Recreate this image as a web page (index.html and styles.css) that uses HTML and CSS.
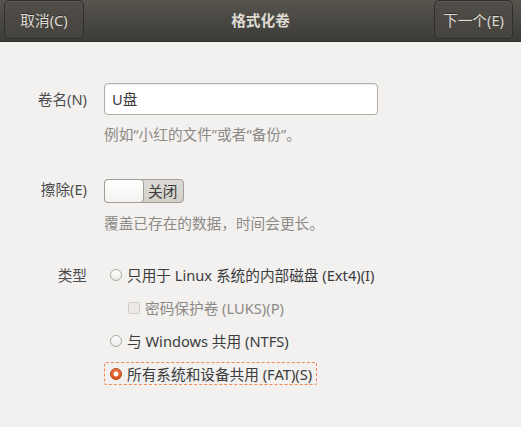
FILE: index.html
```html
<!DOCTYPE html>
<html lang="zh-CN">
<head>
<meta charset="utf-8">
<title>格式化卷</title>
<link rel="stylesheet" href="styles.css">
</head>
<body>
<div class="window">
  <header class="headerbar">
    <button class="hb-btn">取消(C)</button>
    <div class="title">格式化卷</div>
    <button class="hb-btn">下一个(E)</button>
  </header>
  <main class="form">
    <div class="label row-entry">卷名(N)</div>
    <div class="field">
      <div class="entry">U盘</div>
      <div class="hint hint-entry">例如“小红的文件”或者“备份”。</div>
    </div>

    <div class="label row-switch">擦除(E)</div>
    <div class="field">
      <div class="switch"><span class="knob"></span><span class="state">关闭</span></div>
      <div class="hint hint-switch">覆盖已存在的数据，时间会更长。</div>
    </div>

    <div class="label row-type">类型</div>
    <div class="field options">
      <div class="option"><span class="radio"></span><span>只用于 Linux 系统的内部磁盘 (Ext4)(I)</span></div>
      <div class="option sub disabled"><span class="check"></span><span>密码保护卷 (LUKS)(P)</span></div>
      <div class="option"><span class="radio"></span><span>与 Windows 共用 (NTFS)</span></div>
      <div class="option focused"><span class="radio checked"></span><span>所有系统和设备共用 (FAT)(S)</span></div>
    </div>
  </main>
</div>
</body>
</html>
```

FILE: styles.css
```css
* { box-sizing: border-box; }
html, body {
  margin: 0;
  padding: 0;
  background: #f2f1f0;
}
body {
  font-family: "Noto Sans", "Noto Sans CJK SC", sans-serif;
  font-size: 14.67px;
  color: #3c3c3c;
  width: 521px;
  height: 427px;
  overflow: hidden;
}
.headerbar {
  height: 42px;
  background: linear-gradient(#57544e, #3c3b37);
  border-bottom: 1px solid #33322f;
  display: flex;
  align-items: flex-start;
  justify-content: space-between;
  padding: 0 8px 0 4px;
}
.hb-btn {
  font: inherit;
  height: 39px;
  padding: 0;
  white-space: nowrap;
  color: #dfdbd2;
  background: linear-gradient(#514e49, #45433f);
  border: 1px solid #2f2e2b;
  border-radius: 5px;
  box-shadow: inset 0 1px rgba(255,255,255,0.08);
  text-shadow: 0 -1px rgba(0,0,0,0.4);
  width: 80px;
}
.hb-btn:last-child { width: 79px; }
.title {
  flex: 1;
  text-align: center;
  font-weight: bold;
  color: #dfdbd2;
  line-height: 40px;
  padding-left: 3px;
}
.form {
  display: grid;
  grid-template-columns: 87px 1fr;
  column-gap: 17px;
  padding-top: 41px;
  align-items: start;
}
.label {
  text-align: right;
  color: #4c4c4c;
  line-height: 20px;
}
.row-entry { margin-top: 6px; }
.row-switch { margin-top: 35px; }
.row-type { margin-top: 32px; }
.field { display: flex; flex-direction: column; align-items: flex-start; }
.entry {
  width: 274px;
  height: 32px;
  border: 1px solid #b3afa8;
  border-radius: 4px;
  background: #fff;
  box-shadow: inset 0 1px 2px rgba(0,0,0,0.08);
  padding: 0 7px;
  line-height: 30px;
  color: #3c3c3c;
}
.hint {
  color: #8d8a85;
  line-height: 20px;
}
.hint-entry { margin-top: 9px; }
.switch {
  margin-top: 35px;
  width: 80px;
  height: 24px;
  border: 1px solid #a29e97;
  border-radius: 4px;
  background: linear-gradient(#dcdad5, #d3d0ca);
  display: flex;
  align-items: center;
}
.knob {
  width: 40px;
  height: 24px;
  margin: -1px 0 -1px -1px;
  border: 1px solid #a29e97;
  border-radius: 4px;
  background: linear-gradient(#ffffff, #f4f3f1);
}
.state {
  margin-left: 4px;
  color: #3c3c3c;
  line-height: 20px;
}
.hint-switch { margin-top: 10px; }
.options {
  margin-top: 30px;
  gap: 10px;
}
.option {
  display: flex;
  align-items: center;
  height: 23px;
  padding: 0 4px 0 5px;
  gap: 5px;
  border: 1px dashed transparent;
  color: #3c3c3c;
}
.option.sub { padding-left: 23px; }
.option.disabled { color: #8d8a85; }
.option.focused {
  border-color: #ef8a57;
  border-radius: 2px;
}
.radio {
  width: 12px;
  height: 12px;
  border-radius: 50%;
  border: 1px solid #aaa7a1;
  background: linear-gradient(#ffffff, #ecebe8);
  flex: none;
}
.radio.checked {
  border-color: #b74517;
  background: radial-gradient(circle, #ffffff 0 2.2px, transparent 2.8px), linear-gradient(#f07746, #d9541e);
}
.check {
  width: 12px;
  height: 12px;
  border-radius: 2px;
  border: 1px solid #cfccc7;
  background: #eceae7;
  flex: none;
}
```
